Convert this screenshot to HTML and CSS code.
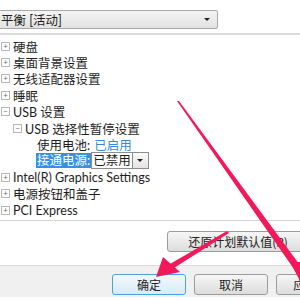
FILE: index.html
```html
<!DOCTYPE html>
<html lang="zh-CN">

    <head>
        <meta charset="UTF-8">
        <title>高级电源设置</title>
        <link rel="stylesheet" href="styles.css">
    </head>

    <body>
        <div class="top">
            <div class="plan">
                <span>平衡 [活动]</span>
                <span class="caret"></span>
            </div>
        </div>

        <div class="tree">
            <div class="row"><span class="box">+</span>硬盘</div>
            <div class="row"><span class="box">+</span>桌面背景设置</div>
            <div class="row"><span class="box">+</span>无线适配器设置</div>
            <div class="row"><span class="box">+</span>睡眠</div>
            <div class="row"><span class="box">−</span>USB 设置</div>
            <div class="row lv1"><span class="box">−</span>USB 选择性暂停设置</div>
            <div class="row lv2">使用电池: <span class="val">已启用</span></div>
            <div class="row lv2">
                <span class="sel">接通电源:</span>
                <span class="drop">已禁用</span><span class="dropbtn"><span class="caret"></span></span>
            </div>
            <div class="row"><span class="box">+</span>Intel(R) Graphics Settings</div>
            <div class="row"><span class="box">+</span>电源按钮和盖子</div>
            <div class="row"><span class="box">+</span>PCI Express</div>
        </div>

        <div class="restore">
            <button class="btn wide">还原计划默认值(R)</button>
        </div>

        <div class="footer">
            <button class="btn focus">确定</button>
            <button class="btn">取消</button>
            <button class="btn">应用(A)</button>
        </div>

        <!-- red arrows drawn over the dialog -->
        <svg class="marks" width="300" height="300" viewBox="0 0 300 300">
            <polygon points="177,101 179,101 302,268 296,272" fill="#f2185a" />
            <polygon points="290,262 312,262 306,292" fill="#f2185a" />
            <polygon points="227,231 229,233 166,273 163,268" fill="#f2185a" />
            <polygon points="156,277 163,257 180,272" fill="#f2185a" />
        </svg>
    </body>

</html>
```

FILE: styles.css
```css
body {
    margin: 0;
    padding: 0;
    width: 300px;
    height: 300px;
    overflow: hidden;
    position: relative;
    font-family: Lato, "Noto Sans CJK SC", sans-serif;
    font-size: 12.5px;
    color: #1e1e1e;
    background-color: #ffffff;
}

.top {
    height: 35px;
    padding-top: 10px;
    box-sizing: border-box;
    border-bottom: 2px solid #dadada;
}

.plan {
    width: 222px;
    height: 19px;
    margin-left: -4px;
    padding: 0 7px 0 4px;
    box-sizing: border-box;
    display: flex;
    justify-content: space-between;
    align-items: center;
    border: 1px solid #a9a9a9;
    border-radius: 2px;
    background: linear-gradient(#f4f4f4, #e2e2e2);
}

.caret {
    width: 0;
    height: 0;
    border-left: 3px solid transparent;
    border-right: 3px solid transparent;
    border-top: 3px solid #222;
}

.tree {
    height: 186px;
    padding-top: 3px;
    box-sizing: border-box;
    border-bottom: 1px solid #d4d4d4;
}

.row {
    height: 16.4px;
    display: flex;
    align-items: center;
    padding-left: 1px;
    white-space: nowrap;
}

.lv1 {
    padding-left: 13px;
}

.lv2 {
    padding-left: 37px;
}

.box {
    width: 7px;
    height: 7px;
    margin-right: 3px;
    border: 1px solid #b9b9b9;
    font-size: 8px;
    line-height: 6px;
    text-align: center;
    color: #6b6b6b;
}

.val {
    color: #3a86d8;
    margin-left: 4px;
}

.sel {
    background-color: #3a8ee6;
    color: #ffffff;
    padding: 0 1px;
    margin-left: -1px;
    height: 15px;
    line-height: 15px;
}

.drop {
    height: 15px;
    line-height: 15px;
    padding: 0 1px;
    border: 1px solid #8d8d8d;
    background-color: #ffffff;
}

.dropbtn {
    width: 15px;
    height: 15px;
    display: flex;
    align-items: center;
    justify-content: center;
    border: 1px solid #8d8d8d;
    border-left: none;
    background: linear-gradient(#fafafa, #e4e4e4);
}

.restore {
    height: 45px;
    padding: 10px 0 0 167px;
    box-sizing: border-box;
    border-bottom: 1px solid #dcdcdc;
}

.btn {
    width: 74px;
    height: 21px;
    padding: 0;
    font-family: "Noto Sans CJK SC", sans-serif;
    font-size: 12px;
    color: #222;
    border: 1px solid #9c9c9c;
    border-radius: 3px;
    background: linear-gradient(#f6f6f6, #dddddd);
}

.wide {
    width: 142px;
}

.footer {
    height: 31px;
    padding: 8px 0 0 112px;
    box-sizing: border-box;
    display: flex;
    gap: 8px;
    background-color: #f0f0f0;
}

.footer .btn {
    flex-shrink: 0;
}

.focus {
    border-color: #4aa3df;
    background: linear-gradient(#f2f8fc, #d9ebf7);
}

.marks {
    position: absolute;
    left: 0;
    top: 0;
}
```
